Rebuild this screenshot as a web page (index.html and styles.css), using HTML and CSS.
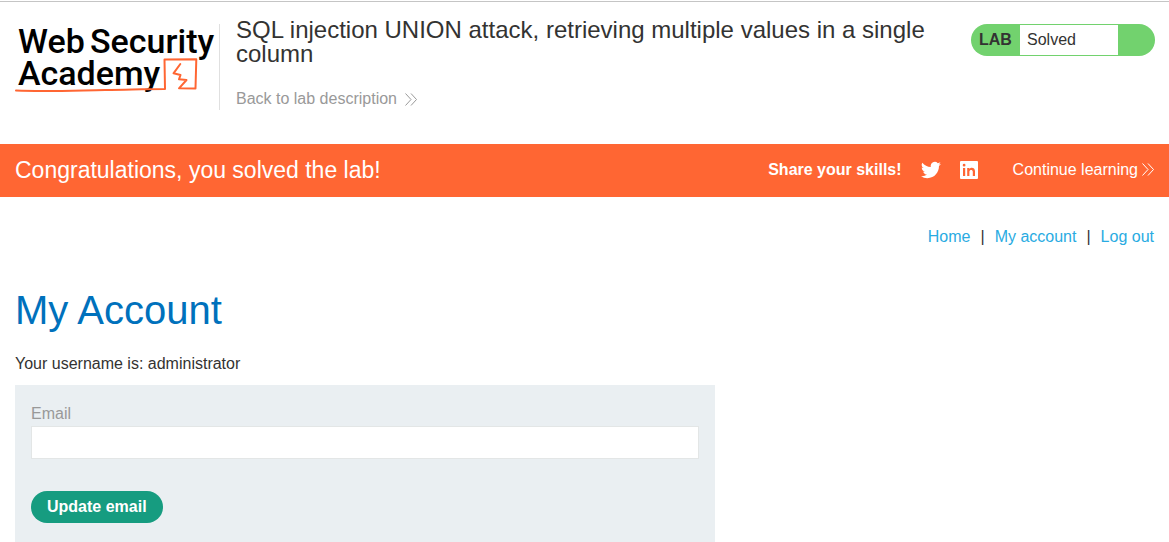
FILE: index.html
```html
<!DOCTYPE html>
<html lang="en">
<head>
<meta charset="utf-8">
<title>SQL injection UNION attack, retrieving multiple values in a single column</title>
<link rel="stylesheet" href="styles.css">
</head>
<body>
<header class="lab-header">
  <a class="logo" href="#" aria-label="Web Security Academy">
    <svg width="204" height="80" viewBox="0 0 204 80">
      <g class="logo-text">
        <text x="3" y="29">Web</text>
        <text x="75" y="29">Security</text>
        <text x="3" y="61">Academy</text>
      </g>
      <g class="logo-mark">
        <path d="M1 66.500C30 67.800 60 66.500 90 66S130 65 150 65L149.500 35.500L181.300 35.200L180.500 64.500L164 64.300L171.500 56L164 55.300L165.500 51L158.500 49.300L165.300 40"/>
      </g>
    </svg>
  </a>
  <div class="title">
    <h1>SQL injection UNION attack, retrieving multiple values in a single column</h1>
    <a class="back" href="#">Back to lab description
      <svg class="chevrons" width="12" height="13" viewBox="0 0 12 13"><path d="M.5 .5L6 6.500L.5 12.500M6 .5L11.500 6.500L6 12.500"/></svg>
    </a>
  </div>
  <div class="status">
    <span class="status-label">LAB</span>
    <span class="status-text">Solved</span>
  </div>
</header>
<section class="banner">
  <p class="banner-message">Congratulations, you solved the lab!</p>
  <span class="share">Share your skills!</span>
  <a class="social" href="#" aria-label="Twitter">
    <svg width="20" height="20" viewBox="0 0 24 24"><path d="M23.950 4.570a10 10 0 0 1-2.820.770 4.960 4.960 0 0 0 2.160-2.720c-.950.550-2 .950-3.130 1.180a4.920 4.920 0 0 0-8.380 4.480C7.690 8.090 4.070 6.130 1.640 3.160a4.920 4.920 0 0 0 1.520 6.570 4.900 4.900 0 0 1-2.230-.610v.060c0 2.380 1.700 4.370 3.950 4.820a5 5 0 0 1-2.210.080 4.940 4.940 0 0 0 4.600 3.420A9.870 9.870 0 0 1 0 19.540a14 14 0 0 0 7.550 2.210c9.050 0 14-7.500 14-13.980l-.020-.640a9.900 9.900 0 0 0 2.420-2.560z"/></svg>
  </a>
  <a class="social" href="#" aria-label="LinkedIn">
    <svg width="18" height="18" viewBox="0 0 18 18"><path fill-rule="evenodd" d="M1 0h16q1 0 1 1v16q0 1-1 1H1q-1 0-1-1V1q0-1 1-1zM3 7v8h2.200V7zM4.100 2.800a1.400 1.400 0 1 0 0 2.800 1.400 1.400 0 0 0 0-2.800zM7.200 7v8h2.200v-4.300c0-2.400 3.400-2.400 3.400 0V15H15v-4.800c0-3.800-4.200-4.300-5.600-2.100V7z"/></svg>
  </a>
  <a class="continue" href="#">Continue learning
    <svg class="chevrons" width="12" height="13" viewBox="0 0 12 13"><path d="M.5 .5L6 6.500L.5 12.500M6 .5L11.500 6.500L6 12.500"/></svg>
  </a>
</section>
<main class="page">
  <nav class="links"><a href="#">Home</a><span>|</span><a href="#">My account</a><span>|</span><a href="#">Log out</a></nav>
  <h2>My Account</h2>
  <p class="username">Your username is: administrator</p>
  <form class="account-form">
    <label for="email">Email</label>
    <input id="email" type="email" name="email">
    <button type="submit">Update email</button>
  </form>
</main>
</body>
</html>
```
FILE: styles.css
```css
* { box-sizing: border-box; }
body {
  margin: 0;
  padding-top: 1px;
  background: #fff;
  color: #333332;
  font: 16px/24px "Liberation Sans", Arial, sans-serif;
}
a { text-decoration: none; }
h1, h2, p { margin: 0; font-weight: 400; }

.lab-header {
  display: flex;
  align-items: flex-start;
  border-top: 1px solid #c5c5c5;
  padding: 22px 14px 33px 15px;
}
.logo {
  flex: none;
  height: 86px;
  border-right: 1px solid #e0e0e0;
}
.logo svg { display: block; overflow: visible; }
.logo-text { font: 500 34px Roboto, sans-serif; fill: #000; }
.logo-mark { fill: none; stroke: #ff6633; stroke-width: 2; stroke-linejoin: round; stroke-linecap: round; }
.title { flex: 1; padding: 0 32px 0 16px; margin-top: -6px; }
h1 { font-size: 24px; line-height: 24px; }
.back { display: inline-flex; align-items: center; gap: 8px; margin-top: 21px; color: #999; }
.chevrons { fill: none; stroke: currentColor; stroke-width: 1; }
.status {
  display: flex;
  flex: none;
  width: 184px;
  height: 32px;
  padding: 1px 37px 1px 0;
  border-radius: 16px;
  background: #72d26e;
  line-height: 30px;
}
.status-label { width: 49px; padding-left: 8px; font-weight: 700; }
.status-text { flex: 1; padding-left: 7px; background: #fff; }

.banner {
  display: flex;
  align-items: center;
  min-height: 53px;
  padding: 0 15px 2px;
  background: #ff6633;
  color: #fff;
}
.banner-message { flex: 1; font-size: 23px; }
.share { font-weight: 700; }
.social { display: flex; margin-left: 19px; fill: #fff; }
.continue { display: flex; align-items: center; gap: 4px; margin-left: 35px; color: #fff; }

.page { padding: 28px 15px 0; }
.links { display: flex; justify-content: flex-end; gap: 10px; }
.links a { color: #29abe2; }
h2 { margin-top: 37px; color: #0071bc; font-size: 40px; line-height: 48px; }
.username { margin-top: 18px; }
.account-form {
  display: flex;
  flex-direction: column;
  align-items: flex-start;
  max-width: 700px;
  margin-top: 9px;
  padding: 17px 16px 19px;
  background: #eaeff2;
}
.account-form label { color: #999; }
.account-form input {
  width: 100%;
  height: 33px;
  padding: 0 8px;
  border: 1px solid #e3e6e6;
  background: #fff;
  font: inherit;
}
.account-form button {
  height: 32px;
  margin-top: 32px;
  padding: 0 16px;
  border: 0;
  border-radius: 16px;
  background: #169c80;
  color: #fff;
  font: inherit;
  font-weight: 700;
}
```
